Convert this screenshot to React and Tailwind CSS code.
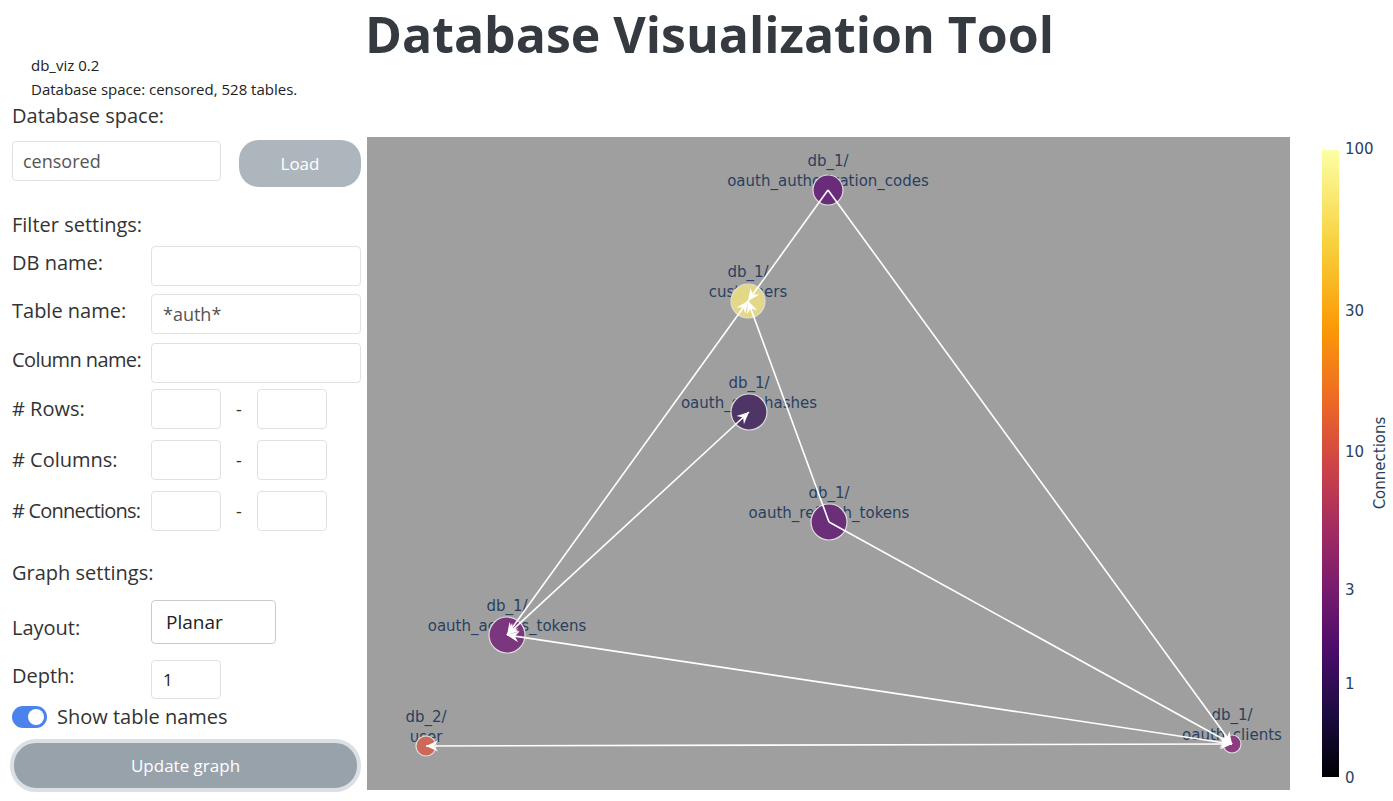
import React from "react";

const nodes = [
  { id: "codes", db: "db_1/", name: "oauth_authorization_codes", x: 461, y: 53, r: 15, fill: "#6a2c7a" },
  { id: "customers", db: "db_1/", name: "customers", x: 381, y: 164, r: 17, fill: "#e2d888" },
  { id: "sso", db: "db_1/", name: "oauth_sso_hashes", x: 382, y: 275, r: 18, fill: "#4e3566" },
  { id: "refresh", db: "db_1/", name: "oauth_refresh_tokens", x: 462, y: 385, r: 18, fill: "#6a2f78" },
  { id: "access", db: "db_1/", name: "oauth_access_tokens", x: 140, y: 498, r: 18, fill: "#7a377e" },
  { id: "user", db: "db_2/", name: "user", x: 59, y: 609, r: 10, fill: "#cd6959" },
  { id: "clients", db: "db_1/", name: "oauth_clients", x: 865, y: 607, r: 9, fill: "#8c3d82" },
];

const byId = Object.fromEntries(nodes.map((n) => [n.id, n]));

const edges = [
  { from: "codes", to: "customers", start: false, end: true },
  { from: "codes", to: "clients", start: false, end: true },
  { from: "customers", to: "access", start: true, end: true },
  { from: "customers", to: "refresh", start: true, end: false },
  { from: "sso", to: "access", start: true, end: true },
  { from: "refresh", to: "clients", start: false, end: true },
  { from: "access", to: "clients", start: true, end: true },
  { from: "clients", to: "user", start: true, end: true },
];

const ticks = [
  { label: "100", y: 12 },
  { label: "30", y: 174 },
  { label: "10", y: 315 },
  { label: "3", y: 453 },
  { label: "1", y: 547 },
  { label: "0", y: 641 },
];

function GraphPlot() {
  return (
    <svg width="1026" height="654" viewBox="0 0 1026 654" className="block">
      <defs>
        <marker
          id="arr"
          viewBox="-13 -7 14 14"
          refX="0"
          refY="0"
          markerWidth="14"
          markerHeight="14"
          markerUnits="userSpaceOnUse"
          orient="auto-start-reverse"
        >
          <path d="M0,0 L-12,-5.5 L-8,0 L-12,5.5 Z" fill="#ffffff" />
        </marker>
        <linearGradient id="inferno" x1="0" y1="1" x2="0" y2="0">
          <stop offset="0" stopColor="#000004" />
          <stop offset="0.1" stopColor="#1b0c41" />
          <stop offset="0.2" stopColor="#4a0c6b" />
          <stop offset="0.3" stopColor="#781c6d" />
          <stop offset="0.4" stopColor="#a52c60" />
          <stop offset="0.5" stopColor="#cf4446" />
          <stop offset="0.6" stopColor="#ed6925" />
          <stop offset="0.72" stopColor="#fb9b06" />
          <stop offset="0.85" stopColor="#f7d13d" />
          <stop offset="1" stopColor="#fcffa4" />
        </linearGradient>
      </defs>

      <rect x="0" y="0" width="923" height="653" fill="#9f9f9f" />

      <g fontFamily="'DejaVu Sans', Verdana, sans-serif" fontSize="15" fill="#2a3f5f" textAnchor="middle">
        {nodes.map((n) => (
          <g key={n.id + "-label"}>
            <text x={n.x} y={n.y - 24}>{n.db}</text>
            <text x={n.x} y={n.y - 4}>{n.name}</text>
          </g>
        ))}
      </g>

      {nodes.map((n) => (
        <circle key={n.id} cx={n.x} cy={n.y} r={n.r} fill={n.fill} stroke="#dcdcdc" strokeWidth="1.2" />
      ))}

      {edges.map((e, i) => {
        const a = byId[e.from];
        const b = byId[e.to];
        return (
          <line
            key={i}
            x1={a.x}
            y1={a.y}
            x2={b.x}
            y2={b.y}
            stroke="#ffffff"
            strokeWidth="1.6"
            markerStart={e.start ? "url(#arr)" : undefined}
            markerEnd={e.end ? "url(#arr)" : undefined}
          />
        );
      })}

      <rect x="955" y="13" width="17" height="627" fill="url(#inferno)" />
      <g fontFamily="'DejaVu Sans', Verdana, sans-serif" fontSize="15" fill="#2a3f5f">
        {ticks.map((t) => (
          <text key={t.label} x="978" y={t.y + 5}>{t.label}</text>
        ))}
        <text x="1018" y="326" fontSize="15" textAnchor="middle" transform="rotate(-90 1018 326)">
          Connections
        </text>
      </g>
    </svg>
  );
}

function Label({ children, className = "" }) {
  return (
    <div className={"w-[139px] shrink-0 whitespace-nowrap text-[20px] leading-[26px] " + className}>
      {children}
    </div>
  );
}

function TextRow({ label, value, labelClass = "" }) {
  return (
    <div className="flex items-center">
      <Label className={labelClass}>{label}</Label>
      <input
        readOnly
        value={value}
        className="w-[210px] h-[40px] border border-[#dee2e6] rounded-[4px] px-[11px] text-[18px] text-[#555] outline-none"
      />
    </div>
  );
}

function RangeRow({ label, labelClass = "" }) {
  return (
    <div className="flex items-center">
      <Label className={labelClass}>{label}</Label>
      <input readOnly className="w-[70px] h-[40px] border border-[#dee2e6] rounded-[4px] outline-none" />
      <div className="w-[36px] text-center text-[18px]">-</div>
      <input readOnly className="w-[70px] h-[40px] border border-[#dee2e6] rounded-[4px] outline-none" />
    </div>
  );
}

export default function App() {
  return (
    <div className="w-[1393px] h-[801px] overflow-hidden bg-white text-[#333] font-['Open_Sans',sans-serif]">
      <div className="h-[68px] flex justify-center items-start pl-[26px]">
        <h1 className="text-[50px] leading-[68px] font-bold text-[#343a40] whitespace-nowrap">
          Database Visualization Tool
        </h1>
      </div>

      <div className="flex -mt-[15px]">
        <div className="w-[367px] pl-[12px] shrink-0">
          <div className="pl-[19px] text-[15px] leading-[24px] text-[#222]">
            <div>db_viz 0.2</div>
            <div>Database space: censored, 528 tables.</div>
          </div>
          <div className="mt-[2px] text-[20px] leading-[26px]">Database space:</div>

          <div className="mt-[11px] flex items-start">
            <input
              readOnly
              value="censored"
              className="mt-[1px] w-[209px] h-[40px] border border-[#dee2e6] rounded-[4px] px-[10px] text-[18px] text-[#555] outline-none"
            />
            <button className="ml-[18px] w-[122px] h-[47px] rounded-[20px] bg-[#adb5bd] text-white text-[17px]">
              Load
            </button>
          </div>

          <div className="mt-[25px] text-[20px] leading-[26px]">Filter settings:</div>

          <div className="mt-[8px]">
            <TextRow label="DB name:" value="" labelClass="pb-[7px]" />
          </div>
          <div className="mt-[8px]">
            <TextRow label="Table name:" value="*auth*" labelClass="pb-[6px]" />
          </div>
          <div className="mt-[9px]">
            <TextRow label="Column name:" value="" labelClass="pb-[7px] tracking-[-0.6px]" />
          </div>
          <div className="mt-[6px]">
            <RangeRow label="# Rows:" />
          </div>
          <div className="mt-[11px]">
            <RangeRow label="# Columns:" />
          </div>
          <div className="mt-[11px]">
            <RangeRow label="# Connections:" labelClass="tracking-[-0.8px]" />
          </div>

          <div className="mt-[29px] text-[20px] leading-[26px]">Graph settings:</div>

          <div className="mt-[14px] flex items-start">
            <Label className="pt-[15px]">Layout:</Label>
            <div className="w-[125px] h-[44px] border border-[#c8cbce] rounded-[4px] pl-[14px] flex items-center text-[19px] text-[#222]">
              Planar
            </div>
          </div>

          <div className="mt-[16px] flex items-start">
            <Label className="pt-[3px]">Depth:</Label>
            <input
              readOnly
              value="1"
              className="w-[70px] h-[39px] border border-[#dee2e6] rounded-[4px] px-[11px] text-[17px] text-[#222] outline-none"
            />
          </div>

          <div className="mt-[7px] flex items-center h-[22px]">
            <div className="w-[35px] h-[22px] rounded-full bg-[#4a83ee] flex items-center justify-end pr-[3px]">
              <div className="w-[16px] h-[16px] rounded-full bg-white" />
            </div>
            <div className="ml-[10px] text-[20px] leading-[26px]">Show table names</div>
          </div>

          <button className="mt-[11px] -ml-[2px] w-[351px] h-[53px] rounded-[26px] border-[4px] border-[#dcdfe3] bg-[#98a2ab] text-white text-[17px]">
            Update graph
          </button>
        </div>

        <div className="mt-[84px] flex-1">
          <GraphPlot />
        </div>
      </div>
    </div>
  );
}
